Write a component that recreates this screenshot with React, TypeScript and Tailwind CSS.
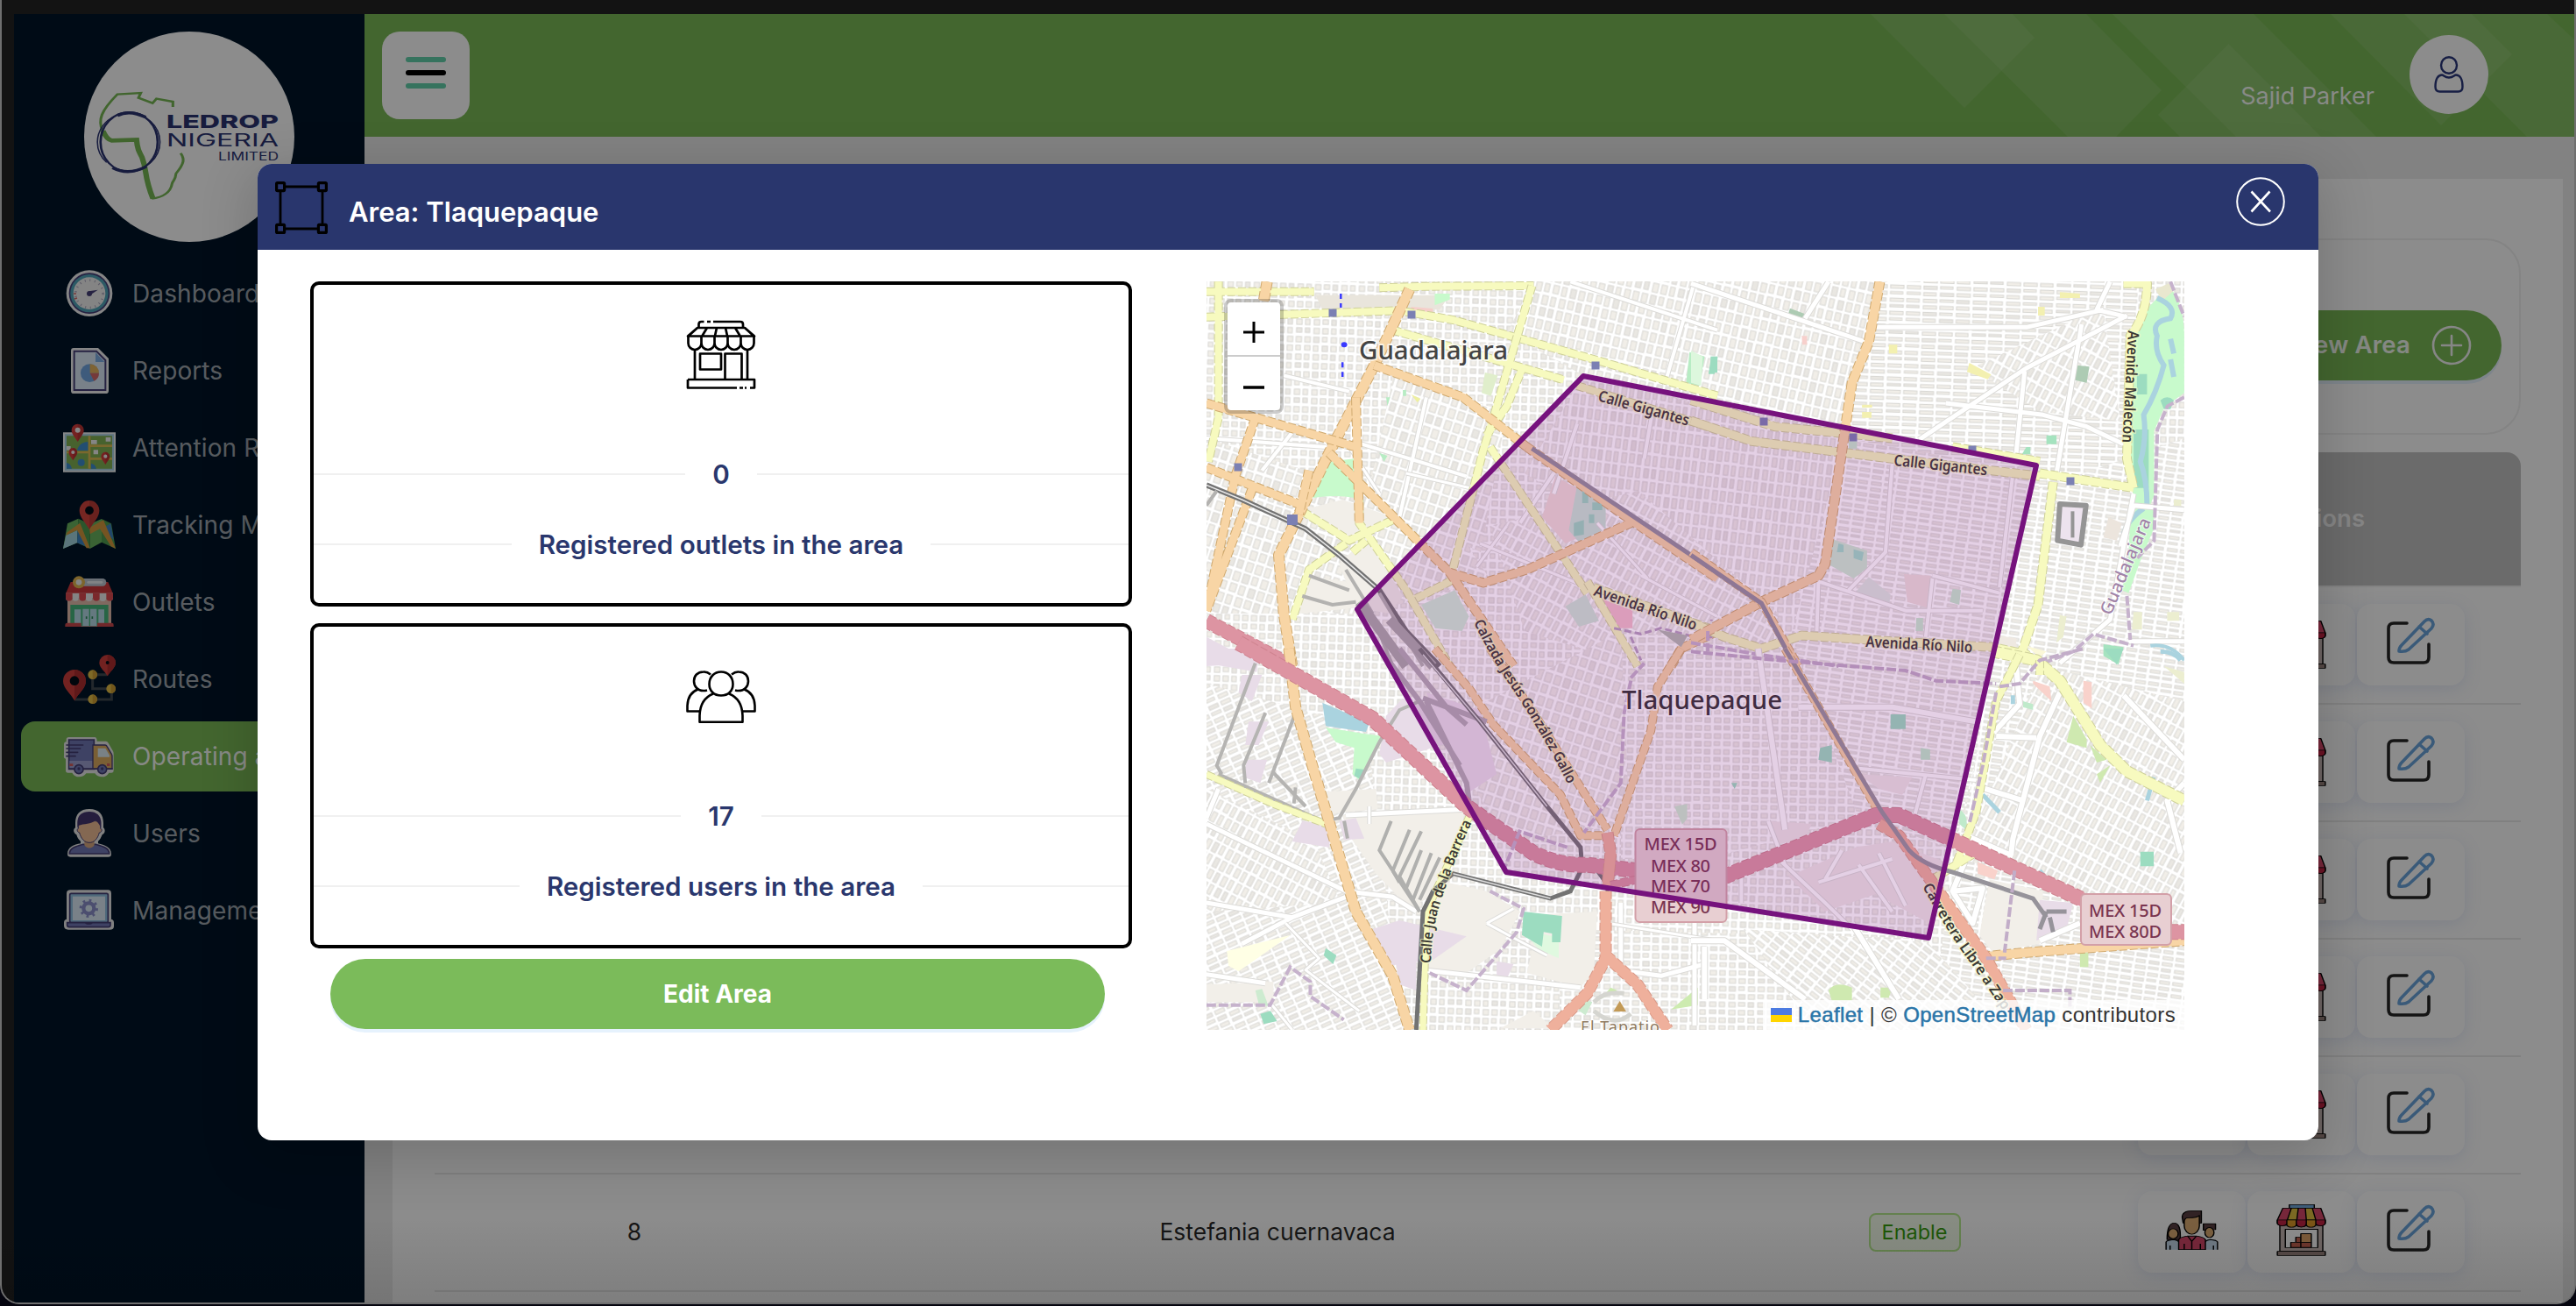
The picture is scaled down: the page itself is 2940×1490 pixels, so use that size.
import React from "react";

const INTER = "font-['Inter','Noto_Sans',sans-serif]";

/* ---------- Sidebar icons ---------- */

const DashboardIcon = () => (
  <svg viewBox="216 45 180 180" className="size-[60px]">
    <circle cx="306" cy="134" r="79" fill="#f2f2f2" />
    <circle cx="306" cy="134" r="70" fill="#453f78" />
    <circle cx="306" cy="134" r="65" fill="#50a5b8" />
    <circle cx="306" cy="134" r="55" fill="#f0f0f0" />
    <circle cx="306" cy="136" r="47" fill="none" stroke="#a9a5bd" strokeWidth="8" strokeDasharray="3 14" />
    <path d="M252 135h9M255 153l9-3" stroke="#d56b6b" strokeWidth="5" />
    <circle cx="306" cy="135" r="9" fill="#453f78" />
    <path d="M304 127l31-5-27 18z" fill="#453f78" />
  </svg>
);

const ReportsIcon = () => (
  <svg viewBox="216 309 180 180" className="size-[60px]">
    <path d="M252 321h84l36 36v110q0 10-10 10H252q-9 0-9-10V331q0-10 9-10z" fill="#f2f2f2" />
    <path d="M254 332h76l31 31v102H254z" fill="#dcebfa" stroke="#453f78" strokeWidth="6" />
    <path d="M327 336v33h31z" fill="#7fb0e5" />
    <circle cx="307" cy="407" r="31" fill="#72a7e2" />
    <path d="M308 407v-31a31 31 0 0 1 31 31z" fill="#e6b560" />
    <path d="M308 407h31a31 31 0 0 1-17 27z" fill="#d56b6b" />
  </svg>
);

const Pin = ({ x, y, s, c = "#d63c3c", h = "#f2f2f2" }: { x: number; y: number; s: number; c?: string; h?: string }) => (
  <g transform={`translate(${x} ${y}) scale(${s})`}>
    <path d="M0 0C-9-16-21-26-21-40a21 21 0 0 1 42 0C21-26 9-16 0 0z" fill={c} />
    <path d="M0 0C9-16 21-26 21-40A21 21 0 0 0 0-61z" fill="#000" opacity=".12" />
    <circle cx="0" cy="-40" r="9" fill={h} />
  </g>
);

const AttentionIcon = () => (
  <svg viewBox="216 573 180 180" className="size-[60px]">
    <path d="M216 610h180v136H216z" fill="#f0f4f6" />
    <path d="M222 616h168v124H222z" fill="#a9d3e8" />
    <path d="M228 622h156v112H228z" fill="#82b255" />
    <path d="M264 672q6-28 38-30v30zM228 714q14 2 18 20h-18zM312 716q14 2 18 18h-18z" fill="#3f8fd0" />
    <circle cx="278" cy="713" r="12" fill="#3f8fd0" />
    <path d="M306 622v112M228 678h78M306 656h78M306 700h78" stroke="#dfbe55" strokeWidth="8" />
    <path d="M312 636h20v14h-20zM362 627h17v14h-17zM320 670h16v15h-16zM228 657h14v14h-14z" fill="#f2f2f2" />
    <Pin x={266} y={642} s={1} />
    <Pin x={250} y={706} s={0.7} />
    <Pin x={361} y={720} s={0.7} />
  </svg>
);

const TrackingIcon = () => (
  <svg viewBox="216 837 180 180" className="size-[60px]">
    <path d="M231 922l37-17-4 83-48 20z" fill="#6bb55f" />
    <path d="M226 962l40-18-2 44-48 20z" fill="#a4d5e0" />
    <path d="M268 905l40 18v85l-44-20z" fill="#4f9d50" />
    <path d="M266 944l42 62-44-18z" fill="#3d83c4" />
    <path d="M308 923l40-17v80l-40 22z" fill="#6bb55f" />
    <path d="M348 906l33 16 15 86-48-22z" fill="#4f9d50" />
    <path d="M348 940l31-18 10 56z" fill="#3d83c4" />
    <path d="M230 952l44-32 34 86h-12l-32-62-38 18zM306 936l48-26 42 98-16-8-38-60-34 18z" fill="#d69a3f" />
    <Pin x={306} y={942} s={1.62} c="#d8453f" h="#000b16" />
  </svg>
);

const OutletsIcon = () => (
  <svg viewBox="216 1101 180 180" className="size-[60px]">
    <path d="M231 1180h150v94H231z" fill="#e8c0b0" />
    <path d="M241 1200h130v72H241z" fill="#48b87e" />
    <path d="M255 1216h22v54h-22zM283 1214h22v58h-22zM309 1214h22v58h-22zM337 1216h20v54h-20z" fill="#b9dcea" />
    <path d="M242 1122h128l17 40H225z" fill="#cf3a3c" />
    <path d="M225 1160h162v16a11 11 0 0 1-23 0 11 11 0 0 1-24 0 11 11 0 0 1-23 0 11 11 0 0 1-24 0 11 11 0 0 1-23 0 11 11 0 0 1-23 0 11 11 0 0 1-22 0z" fill="#f0f0f0" />
    <path d="M225 1160h23v16a11 11 0 0 1-23 0zM271 1160h23v16a11 11 0 0 1-23 0zM318 1160h23v16a11 11 0 0 1-23 0zM364 1160h23v16a11 11 0 0 1-23 0z" fill="#e04b50" />
    <rect x="260" y="1110" width="104" height="26" rx="13" fill="#bfcad6" />
    <path d="M302 1123h46" stroke="#eceff2" strokeWidth="8" strokeLinecap="round" />
    <circle cx="270" cy="1123" r="21" fill="#e3b850" />
    <circle cx="270" cy="1123" r="10" fill="#f0f0f0" />
    <path d="M223 1269q0-7 7-7h48v13h-55zM333 1262h50q6 0 6 7v6h-56z" fill="#cc4a4e" />
    <path d="M296 1240v8M316 1240v8" stroke="#2f8a5a" strokeWidth="5" />
  </svg>
);

const RoutesIcon = () => (
  <svg viewBox="216 165 180 180" className="size-[60px]">
    <path d="M255 324h127v-37h-65v-48h50" fill="none" stroke="#404a50" strokeWidth="9" />
    <path d="M255 328c-14-26-39-42-39-67a39 39 0 0 1 78 0c0 25-25 41-39 67z" fill="#d03f3c" />
    <path d="M255 328c14-26 39-42 39-67a39 39 0 0 0-39-39z" fill="#b02f30" />
    <circle cx="255" cy="260" r="16" fill="#000b16" />
    <path d="M368 244c-10-18-28-28-28-45a28 28 0 0 1 56 0c0 17-18 27-28 45z" fill="#d03f3c" />
    <path d="M368 244c10-18 28-28 28-45a28 28 0 0 0-28-28z" fill="#b02f30" />
    <circle cx="368" cy="198" r="6" fill="#000b16" />
    {[[317, 239], [380, 287], [317, 323]].map(([x, y]) => (
      <g key={`${x}-${y}`}>
        <circle cx={x} cy={y} r="16" fill="#e6c048" />
        <path d={`M${x} ${y - 16}a16 16 0 0 1 0 32z`} fill="#cf9f34" />
      </g>
    ))}
  </svg>
);

const TruckIcon = () => (
  <svg viewBox="216 429 180 180" className="size-[60px]">
    <path d="M236 453h88q8 0 8 14h30q6 0 9 6l16 28q2 4 2 10v56q0 8-8 8h-8q-8 14-24 14-16 0-24-12h-30q-8 12-24 12t-24-14h-14q-8 0-8-8v-40q-8-2-6-12v-36q0-10 8-10v-8q0-8 9-8z" fill="#eaeaea" />
    <path d="M236 462h86v100h-86z" fill="#7279b6" stroke="#443e75" strokeWidth="5" />
    <path d="M238 534h84v27h-84z" fill="#9ea2d2" />
    <path d="M318 480h42q4 0 6 4l16 27q2 3 2 7v44h-66z" fill="#dfae62" stroke="#443e75" strokeWidth="4" />
    <path d="M335 491h26l14 24v6h-40z" fill="#dcebf5" />
    <path d="M228 480h56M228 492h47M228 505h38M228 518h30" stroke="#443e75" strokeWidth="5" strokeLinecap="round" />
    <path d="M234 561h152" stroke="#443e75" strokeWidth="5" />
    <path d="M238 544h12v8h-12zM366 543h10v9h-10z" fill="#d25b5b" />
    {[270, 350].map((x) => (
      <g key={x}>
        <circle cx={x} cy="563" r="15" fill="#7279b6" stroke="#443e75" strokeWidth="5" />
        <circle cx={x} cy="561" r="5" fill="#443e75" />
      </g>
    ))}
  </svg>
);

const UserIcon = () => (
  <svg viewBox="216 693 180 180" className="size-[60px]">
    <path d="M306 699c34 0 48 20 48 48v16c8 6 6 20-4 24-4 10-8 18-14 22v8c22 6 45 12 45 36 0 8-4 10-10 10H241c-8 0-10-4-10-10 0-24 22-32 45-36v-8c-8-6-12-14-14-22-12-6-12-20-4-24v-16c0-30 16-48 48-48z" fill="#eaeaea" />
    <path d="M238 852c0-20 24-26 46-32h44c22 6 46 12 46 32z" fill="#7279b6" stroke="#443e75" strokeWidth="5" />
    <path d="M289 806h34v16c-6 14-28 14-34 0z" fill="#dba982" />
    <path d="M268 740h76v26c8 2 4 14-4 14-6 22-18 34-34 34s-28-12-34-34c-8-2-10-12-4-14z" fill="#f0bd96" stroke="#443e75" strokeWidth="3" />
    <path d="M265 764v-18c0-26 16-38 41-38s40 14 40 38v18c-4-8-8-18-20-26-14 14-38 10-58 18z" fill="#443570" />
  </svg>
);

const ManagementIcon = () => (
  <svg viewBox="216 957 180 180" className="size-[60px]">
    <path d="M240 976h130q11 0 11 12v88q9 2 9 12v12q0 12-14 12H234q-15 0-15-14v-10q0-10 9-12v-88q0-12 12-12z" fill="#eaeaea" />
    <rect x="239" y="988" width="131" height="100" rx="5" fill="#8fc0e0" stroke="#443e75" strokeWidth="5" />
    <path d="M249 998h111v82H249z" fill="#dcebf8" />
    <path d="M230 1088h148v8q0 7-8 7H238q-8 0-8-7z" fill="#7279b6" stroke="#443e75" strokeWidth="5" />
    <path d="M291 1089h26q-2 5-8 5h-10q-6 0-8-5z" fill="#443e75" />
    <circle cx="304" cy="1039" r="18" fill="none" stroke="#8a8fcb" strokeWidth="13" />
    <circle cx="304" cy="1039" r="27" fill="none" stroke="#8a8fcb" strokeWidth="10" strokeDasharray="8 13.2" />
  </svg>
);

const nav = [
  { label: "Dashboard", Icon: DashboardIcon },
  { label: "Reports", Icon: ReportsIcon },
  { label: "Attention Radius", Icon: AttentionIcon },
  { label: "Tracking Map", Icon: TrackingIcon },
  { label: "Outlets", Icon: OutletsIcon },
  { label: "Routes", Icon: RoutesIcon },
  { label: "Operating areas", Icon: TruckIcon, active: true },
  { label: "Users", Icon: UserIcon },
  { label: "Management", Icon: ManagementIcon },
];

const Logo = () => (
  <svg viewBox="96 36 240 240" className="size-[240px] rounded-full bg-white">
    <g transform="scale(.44643 .33333)" fill="none">
      <path d="M262 448C250 410 258 380 300 323l60-5-6 17 36 18 10-15 42 10v18" stroke="#77b955" strokeWidth="7" />
      <path d="M388 680c26-4 48-20 52-52 4-14 8-10 10-34 22-36 22-50 12-70" stroke="#77b955" strokeWidth="7" />
      <path d="M263 448q10 30 22 33l64-3c2 30 6 40 14 60 14 50 4 60 28 142" stroke="#77b955" strokeWidth="14" />
      <ellipse cx="330" cy="486" rx="73" ry="102" stroke="#2b3372" strokeWidth="6" />
      <ellipse cx="329" cy="486" rx="80" ry="99" stroke="#2b3372" strokeWidth="3.500" strokeDasharray="180 26" />
      <path d="M300 396q30-22 72 5M288 574q40 28 86-4" stroke="#2b3372" strokeWidth="10" />
    </g>
    <g fill="#2b3372" className="font-['Inter','Liberation_Sans',sans-serif]">
      <text x="190" y="146" fontSize="20.5" fontWeight="800" textLength="128" lengthAdjust="spacingAndGlyphs">LEDROP</text>
      <text x="190" y="166.5" fontSize="19.5" fontWeight="400" textLength="128" lengthAdjust="spacingAndGlyphs">NIGERIA</text>
      <text x="249" y="182.5" fontSize="12.5" fontWeight="400" textLength="69" lengthAdjust="spacingAndGlyphs">LIMITED</text>
    </g>
  </svg>
);

const Sidebar = () => (
  <aside className="flex w-[400px] shrink-0 flex-col bg-[#001529] px-2 pt-5">
    <div className="flex justify-center">
      <Logo />
    </div>
    <nav className="mt-[19px] flex flex-col gap-2">
      {nav.map(({ label, Icon, active }) => (
        <div
          key={label}
          className={
            active
              ? "flex h-20 items-center gap-[19px] rounded-2xl bg-[#7bbb57] pl-12 text-[28px] text-[#fffffff0]"
              : "flex h-20 items-center gap-[19px] rounded-2xl pl-12 text-[28px] text-[#ffffffa6]"
          }
        >
          <Icon />
          <span className="whitespace-nowrap tracking-[0.1px]">{label}</span>
        </div>
      ))}
    </nav>
  </aside>
);

/* ---------- Top bar ---------- */

const HeaderShapes = () => (
  <svg viewBox="2100 16 840 140" className="absolute top-0 right-0 h-[140px] w-[840px]" fill="#fff" fillOpacity=".08">
    <path d="M2135 16L2242 123 2322 43 2297 16z" />
    <path d="M2219 16L2360 156H2415L2467 103 2381 16z" />
    <path d="M2411 16L2552 156H2712L2572 16z" />
    <path d="M2543.5 50L2463 131 2488 156H2649z" />
    <path d="M2660 16L2786 143 2867 62 2821 16z" />
    <path d="M2744 16L2884 156H2940V47L2907 16z" />
  </svg>
);

const TopBar = () => (
  <header className="relative flex h-[140px] shrink-0 items-start justify-between bg-[#7bbb57] pt-5 pr-[100px] pl-5">
    <HeaderShapes />
    <button className="flex size-[100px] flex-col items-center gap-[9px] rounded-[20px] bg-white pt-[29px]">
      <span className="h-1.5 w-[46px] rounded-full bg-[#63d1ac]" />
      <span className="h-1.5 w-[46px] rounded-full bg-black" />
      <span className="h-1.5 w-[46px] rounded-full bg-[#63d1ac]" />
    </button>
    <div className="relative flex gap-10 pt-1">
      <span className="pt-[52px] text-[27px] leading-9 text-[#fffffff0]">Sajid Parker</span>
      <span className="flex size-[90px] items-center justify-center rounded-full bg-white">
        <svg viewBox="0 0 34 42" className="h-[42px] w-[34px]" fill="none" stroke="#2b387c" strokeWidth="2.4">
          <ellipse cx="17" cy="10.5" rx="9" ry="9.3" />
          <path d="M9 21.500c-4 0-7.500 4-7.500 13.500 0 4 2 5.500 5 5.500h21c3 0 5-1.500 5-5.500 0-9.500-3.500-13.500-7.500-13.500-2 0-3 3-8 3s-6-3-8-3z" />
        </svg>
      </span>
    </div>
  </header>
);

/* ---------- Table ---------- */

const TeamIcon = () => (
  <svg viewBox="752 530 106 137" preserveAspectRatio="none" className="h-[46px] w-[61px]" stroke="#000" strokeWidth="2.500" strokeLinejoin="round">
    <path d="M754 666v-26q2-10 14-10 12 0 14 10v26zM828 666v-26q2-10 14-10 12 0 14 10v26z" fill="#c9dcee" stroke="none" />
    <path d="M756 632q0-56 14-56t12 56zM828 600v-22h24v20z" fill="#5a3f42" />
    <ellipse cx="768" cy="612" rx="10" ry="17" fill="#dfae74" />
    <ellipse cx="840" cy="608" rx="9" ry="17" fill="#dfae74" />
    <path d="M754 666v-26q2-6 14-8 12 2 12 12M856 666v-26q-2-6-14-8-10 2-12 12M762 666v-14M848 666v-14" fill="none" />
    <path d="M779 666v-34q3-8 18-12h17q15 4 18 12v34z" fill="#d8486a" />
    <path d="M786 556q0-22 20-22h18v42h-36z" fill="#5a3f42" />
    <path d="M790 572q0-14 8-14 18 0 22-8v36c0 16-8 28-15 28s-15-12-15-28z" fill="#dfae74" />
    <path d="M797 620l8 18 9-18M805 638v28M790 666v-20M822 666v-20" fill="none" />
  </svg>
);

const ShopIcon = () => (
  <svg viewBox="971 509 100 181" preserveAspectRatio="none" className="h-[60px] w-[57px]" stroke="#000" strokeWidth="2.500" strokeLinejoin="round">
    <path d="M978 584h86v90h-86z" fill="#c9b9b4" />
    <path d="M997 513h50v12h-50z" fill="#74a9dc" />
    <path d="M984 525h76l9 41v10a10 10 0 0 1-19 4 10 10 0 0 1-19 0 10 10 0 0 1-20 0 10 10 0 0 1-19 0 10 10 0 0 1-19-4v-10z" fill="#d8486a" />
    <path d="M1001 525h14l-3 41v20q-12 0-19-10v-10zM1029 525h14l7 41v10q-8 12-19 10v-20z" fill="#e0c040" />
    <path d="M973 566h96v10a10 10 0 0 1-19 4 10 10 0 0 1-19 0 10 10 0 0 1-20 0 10 10 0 0 1-19 0 10 10 0 0 1-19-4z" fill="#c42444" />
    <path d="M992 566h19v18a10 10 0 0 1-19 0zM1031 566h19v18a10 10 0 0 1-19 0z" fill="#e09c28" />
    <path d="M989 598h65v63h-65z" fill="#fff" />
    <path d="M1000 643h20v17h-20zM1010 625h12v18h-12zM1020 643h21v17h-21z" fill="#c56350" />
    <path d="M1020 613h21v30h-21z" fill="#e0a568" />
    <path d="M973 674h96v14h-96z" fill="#9b8580" />
  </svg>
);

const EditIcon = () => (
  <svg viewBox="0 0 56 56" className="size-14" fill="none" strokeWidth="3.600" strokeLinecap="round" strokeLinejoin="round">
    <path d="M23 8H8q-6 0-6 6v33q0 6 6 6h34q6 0 6-6V32" stroke="#262626" />
    <path d="M17 33L43 6q4-4 8-1 4 4 0 9L25 38q-4 3-11 2 0-4 3-7zM37 12l9 8" stroke="#6ba5dc" />
  </svg>
);

const ActionCard = ({ children }: { children: React.ReactNode }) => (
  <div className="flex h-[93px] w-[123px] justify-center rounded-2xl bg-white pt-3.5 shadow-[0_4px_20px_rgba(90,120,200,0.16)]">
    {children}
  </div>
);

const rows: { key: number; id?: string; name?: string; status?: string }[] = [
  { key: 3 },
  { key: 4 },
  { key: 5 },
  { key: 6 },
  { key: 7 },
  { key: 8, id: "8", name: "Estefania cuernavaca", status: "Enable" },
];

const AreasPage = () => (
  <main className="mt-12 ml-8 flex h-[1300px] w-[2477px] shrink-0 flex-col bg-white px-12 pt-[68px]">
    <section className="flex h-[224px] w-[2381px] shrink-0 items-center justify-end rounded-[40px] border-2 border-[#f0f0f0] pr-5 pb-0">
      <button className="mt-5 flex h-20 w-[310px] items-center justify-end gap-6 rounded-full bg-[#7bbb57] pr-[34px] text-[27.500px] font-semibold tracking-[0.2px] text-white/90 shadow-[0_4px_0_#e6f2fd]">
        New Area
        <svg viewBox="0 0 46 46" className="size-[46px]" fill="none" stroke="#f4f4f4" strokeWidth="2.600">
          <circle cx="23" cy="23" r="21" />
          <path d="M23 12v22M12 23h22" strokeLinecap="round" />
        </svg>
      </button>
    </section>
    <div className="mt-5 flex w-[2381px] shrink-0 flex-col">
      <div className="flex h-[154px] items-center justify-end rounded-tr-2xl rounded-tl-2xl border-b-2 border-[#f0f0f0] bg-[#c3c3c3] pr-[178px] text-[27.500px] font-semibold text-[#f3f3f3]">
        Actions
      </div>
      {rows.map((r) => (
        <div
          key={r.key}
          className="grid h-[134px] grid-cols-[456px_1012px_442px_471px] items-center border-b-2 border-[#eaeaea] text-center text-[26.500px] text-black/85"
        >
          <span>{r.id}</span>
          <span>{r.name}</span>
          <span>
            {r.status && (
              <span className="inline-block rounded-lg border-2 border-[#b7eb8f] bg-[#f6ffed] px-[13px] text-[23.500px] leading-10 text-[#389e0d]">
                {r.status}
              </span>
            )}
          </span>
          <span className="flex w-[407px] -translate-y-px justify-end gap-0.5">
            <ActionCard><div className="pt-[7px]"><TeamIcon /></div></ActionCard>
            <ActionCard><ShopIcon /></ActionCard>
            <ActionCard><EditIcon /></ActionCard>
          </span>
        </div>
      ))}
    </div>
  </main>
);

/* ---------- Map ---------- */

const KX = 600 / 1568;
const KY = 1 / 3;

const Tile = ({ x, y, children }: { x: number; y: number; children: React.ReactNode }) => (
  <g transform={`translate(${x} ${y}) scale(${KX} ${KY})`}>{children}</g>
);

const roadColors = {
  yellow: ["#f7fabf", "#cfd19a"],
  orange: ["#f8d5a5", "#d0aa70"],
  pink: ["#dd94a2", "#cf8490"],
  salmon: ["#efb09c", "#d99a88"],
  white: ["#ffffff", "#dcdbd8"],
} as const;

const Road = ({ d, kind, w = 9 }: { d: string; kind: keyof typeof roadColors; w?: number }) => (
  <g fill="none" strokeLinejoin="round">
    <path d={d} stroke={roadColors[kind][1]} strokeWidth={w + 2} strokeDasharray={kind === "white" ? undefined : "9 3"} vectorEffect="non-scaling-stroke" />
    <path d={d} stroke={roadColors[kind][0]} strokeWidth={w} vectorEffect="non-scaling-stroke" />
  </g>
);

const Rail = ({ d, w = 4, c = "#737373" }: { d: string; w?: number; c?: string }) => (
  <path d={d} fill="none" stroke={c} strokeWidth={w} vectorEffect="non-scaling-stroke" />
);

const Streets = ({ id, angle, w, h }: { id: string; angle: number; w: number; h: number }) => (
  <pattern id={id} width={w * 5} height={h * 4} patternUnits="userSpaceOnUse" patternTransform={`rotate(${angle})`}>
    <rect width={w * 5} height={h * 4} fill="#fff" />
    {[0, 1, 2, 3].map((r) =>
      [0, 1, 2, 3, 4].map((c) => (
        <rect
          key={`${r}${c}`}
          x={c * w + 1.9}
          y={r * h + 1.9}
          width={w - ((r + c) % 3 === 0 ? 4.8 : 3.8)}
          height={h - ((r * 2 + c) % 4 === 0 ? 4.8 : 3.8)}
          fill={(r * 3 + c) % 4 === 0 ? "#e9e7e2" : "#f1eee8"}
          stroke="#d6d5d1"
          strokeWidth=".9"
        />
      )),
    )}
  </pattern>
);

const Metro = ({ pts }: { pts: number[][] }) => (
  <>
    {pts.map(([x, y, s = 9]) => (
      <rect key={`${x}-${y}`} x={x - s / 2} y={y - s / 2} width={s} height={s} fill="#7b80b3" />
    ))}
  </>
);

const CityMap = () => (
  <svg viewBox="1377 321 1116 854" className="h-[854px] w-[1116px]">
    <defs>
      <Streets id="st-nw" angle={2} w={10} h={10} />
      <Streets id="st-w" angle={18} w={11} h={14} />
      <Streets id="st-n" angle={13} w={10} h={14} />
      <Streets id="st-ne" angle={2} w={19} h={7.500} />
      <Streets id="st-e" angle={8} w={15} h={7} />
      <Streets id="st-c" angle={7} w={9} h={15} />
      <Streets id="st-s" angle={1} w={11} h={9} />
      <Streets id="st-se" angle={38} w={14} h={8} />
      <Streets id="st-sw" angle={-24} w={15} h={8} />
      <Streets id="st-d" angle={28} w={9} h={15} />
      <path id="lbl-gallo" d="M1682 710Q1700 748 1722 780Q1760 836 1790 896" />
      <path id="lbl-barrera" d="M1633 1099Q1634 1055 1648 1018Q1664 970 1681 936" />
      <path id="lbl-zapo" d="M2194 1011Q2225 1068 2250 1100L2288 1156" />
    </defs>

    <rect x="1377" y="321" width="1116" height="854" fill="url(#st-nw)" />
    <path d="M1377 500L1560 560 1660 600 1700 660 1560 700 1377 700z" fill="url(#st-w)" />
    <path d="M1750 321H2145L2110 500 1810 430 1720 380z" fill="url(#st-n)" />
    <path d="M1590 430L1720 470 1690 630 1560 570z" fill="url(#st-w)" />
    <path d="M2145 321H2440V560H2300L2105 500z" fill="url(#st-ne)" />
    <path d="M2250 420L2400 350 2420 480 2330 470z" fill="url(#st-d)" />
    <path d="M1807 429L2100 500 2070 680 1990 690 1740 540z" fill="url(#st-c)" />
    <path d="M2105 500L2330 540 2280 760 2040 740z" fill="url(#st-e)" />
    <path d="M1700 600L1870 560 2030 700 2000 800 1740 720z" fill="url(#st-d)" />
    <path d="M1850 720L2060 740 2130 930 1950 980 1850 980z" fill="url(#st-s)" />
    <path d="M2050 740L2280 760 2230 970 2120 930z" fill="url(#st-e)" />
    <path d="M2320 560L2493 500V1175H2200L2240 940z" fill="url(#st-e)" />
    <path d="M2330 760L2493 800V1060L2240 980z" fill="url(#st-d)" />
    <path d="M1377 780L1560 830 1600 1175H1377z" fill="url(#st-sw)" />
    <path d="M1377 900L1500 960 1530 1030 1377 1040z" fill="url(#st-d)" />
    <path d="M1780 1060L2180 1070 2280 1175H1780z" fill="url(#st-s)" />
    <path d="M1990 1060L2200 1075 2290 1175H2070z" fill="url(#st-se)" />
    <path d="M1640 830L1850 720 1860 940 1720 960z" fill="url(#st-w)" />

    <Tile x={1360} y={310}>
      <path d="M370 80h400l-30 50H390z" fill="#e9e5dc" />
      <path d="M655 120l65 6v14l-65-8z" fill="#f5cfca" />
      <path d="M725 75h45v20l-45 20z" fill="#c8facc" />
      <path d="M350 810l100-30 150 60-80 80-60 20z" fill="#f2efe9" />
      <path d="M362 768l46-118 78-10v134q-60-12-124 0z" fill="#c8facc" />
      <path d="M440 1000l80-90 110 200-40 60-100-20z" fill="#f2efe9" />
      <path d="M330 1040l130 20 40 90-180 20z" fill="#f2efe9" />
      <path d="M1085 700l140 90-10 90-100 50-70-90z" fill="#f0ddd8" />
      <path d="M1150 730l85 60v90l-80 45-30-40z" fill="#c9e4d4" />
      <path d="M1165 750l18 12v30h-18zM1195 790h30v26h-30zM1140 860l30-10v50l-30 5zM1185 830h16v30h-16z" fill="#9cd6c0" />
      <path d="M685 1140l100-50 42 90-20 50-80-10z" fill="#d0ecd6" />
      <path d="M1115 1145l60-40 40 90-60 20z" fill="#cfe6d6" />
      <path d="M1225 1120l90 40v60h-40z" fill="#f4c0cb" />
      <path d="M875 345l38 10-20 70-28-10z" fill="#e0eecb" />
      <path d="M1485 275l45 15-15 100-40-10zM580 430h12l-8 30zM630 405h10v20h-10zM560 620l24 10-10 20z" fill="#b8ecc4" />
      <path d="M1548 290h20v55h-20z" fill="#9cdcc0" />
      <path d="M655 420l28 15-10 12z" fill="#eef0a0" />
      <path d="M44 1250l150 90-150 10z" fill="#e8dce8" />

      <Road kind="white" w={4} d="M1130 34L1568 200M1500 34L1410 390M275 355L470 410M480 580L820 700M700 430L620 840M44 570L400 600M210 680L300 550M1080 690L980 860M1150 520L1080 760M1380 440L1350 640" />
      <Road kind="white" w={3} d="M830 740L640 690M470 600L560 760M860 930L1180 1080M940 870L850 1010M1210 860L1360 1050M1340 1040L1568 1180" />
      <Road kind="yellow" w={8} d="M44 68H365M560 55L700 50 1020 48M80 34V500L50 650M44 155L620 133 780 165 1200 300 1568 425" />
      <Road kind="yellow" w={8} d="M1015 48L900 500 870 610 770 1060 650 1130M600 200L1110 370M990 320L940 460 880 560M890 600L1180 1100" />
      <Road kind="yellow" w={8} d="M1150 390L1568 540M330 820L470 920 600 850M460 930L350 1020 300 1190M480 960L520 920M500 780V860L640 1090 770 1350M1180 1060L1330 1350M1200 1080L1568 1230" />
      <Road kind="orange" w={11} d="M225 34L215 100M650 60L545 320 410 620 320 830 260 970 275 1170 300 1350" />
      <Road kind="orange" w={9} d="M44 450L490 600M190 500L130 700 44 1160M44 670L330 800M350 680L320 830M180 745L44 1160M545 320L810 430 1000 600M490 430L500 860M410 620L770 1030 870 1065 1000 1020 1310 860M770 1030L960 1350M1000 600L1310 850 1568 1050M1568 1230L1460 1290 1430 1350" />
      <Rail d="M44 730L150 780 340 880 440 970 560 1090 640 1230 740 1350" w={6} />
      <Rail d="M44 730L150 780 340 880 440 970 560 1090" w={1.500} c="#e9e9e9" />
      <Rail d="M75 750L44 800M350 1040L470 1090M330 1110L420 1140 490 1130M460 1020L540 1170M560 1100L690 1350M530 1150L600 1350" w={4} c="#b3b2b0" />
      <Rail d="M500 1130L640 1350M590 1190L720 1350" w={11} c="#aaa8a8" />
      <Rail d="M1015 605L1568 1030" w={5} c="#94909c" />
      <Road kind="pink" w={15} d="M44 1195L300 1350" />
      <path d="M1260 1220l80 20 60-20 100 30h50v-60M1310 1250l30 80" fill="none" stroke="#b79fc0" strokeWidth="3" strokeDasharray="8 4" vectorEffect="non-scaling-stroke" />
      <path d="M1390 1225l90 20-20 40z" fill="#b3b8b0" />
      <path d="M445 75v48M450 310v50" stroke="#3a3aff" strokeWidth="2.500" strokeDasharray="6 5" vectorEffect="non-scaling-stroke" />
      <circle cx="455" cy="250" r="9" fill="#3a3aff" />
    </Tile>

    <Tile x={1930} y={310}>
      <path d="M1390 90l40-35q40 60 41 160v200l-60 50-30 80v220l-20 60h-40l-10-200V500l15-330z" fill="#c8facc" />
      <path d="M1310 820l70-10v70l-40 110-35 110-20-10 20-110z" fill="#c8facc" />
      <path d="M1330 350h30v70h-30zM1400 440q20-20 40 0l-10 30h-20zM1320 540h45v200h-45z" fill="#9cdcc0" />
      <path d="M1385 60l40-20 20 20-40 40z" fill="#e9e7cf" />
      <path d="M1390 90q60 30 40 70-60 10-40 60-10 50 20 100-20 90-60 170 10 80-10 160 20 60 20 150M1350 810q-50 40-60 90M1430 230l10 50M1430 300l10 60" fill="none" stroke="#aad3df" strokeWidth="6" vectorEffect="non-scaling-stroke" />
      <path d="M1100 795l78 5-15 135-70-15z" fill="#ede3ee" stroke="#959595" strokeWidth="6" strokeLinejoin="round" vectorEffect="non-scaling-stroke" />
      <path d="M1138 820v90" stroke="#959595" strokeWidth="4" vectorEffect="non-scaling-stroke" />
      <path d="M420 915l105 40v60l-40 35-70-45z" fill="#cdebd3" />
      <path d="M440 930l15 5v25h-20zM485 950l30 10-5 30-25-10z" fill="#9fdcc8" />
      <path d="M530 1045l65 60-5 40-105-40z" fill="#dfe9e2" />
      <path d="M635 1035l80 5-10 110-60-20z" fill="#f0e2de" />
      <path d="M780 1085l25 5-5 50-28-10zM672 1185h20v45h-22zM470 580h25v25h-25z" fill="#c8ebd0" />
      <path d="M1150 320l38 5-8 55-40-10zM295 125l45 20-10 15-40-15z" fill="#adcbb3" />
      <path d="M0 270l35 20-5 100-30-10z" fill="#ddf7dd" />
      <path d="M60 292h20l-10 58h-18z" fill="#9cdcc0" />
      <path d="M830 312l65 40-10 16-62-25zM590 250h25v30h-25zM1035 120h20v30h-20zM510 455h30v10h-30zM510 480h28v20h-28zM1100 70l60 5v15h-60z" fill="#f3f0b0" />
      <path d="M1060 560h30v30h-30zM1000 600h12v25h-25zM1230 1275l60 10-15 60-45-30z" fill="#a5e3bf" />
      <path d="M1100 1175l20 5-10 70-20 20zM1320 1165h25v60h-30zM1420 1165h36v30h-36zM1440 780h22v22h-22z" fill="#eceed0" />
      <path d="M920 1245l50 10v50l-50-10z" fill="#efe9e2" />
      <path d="M330 220h16v30h-14z" fill="#f7d0cc" />
      <path d="M1000 1280l60 20-20 20z" fill="#fbf8d8" />
      <path d="M1245 840l40 20-15 60-40-10z" fill="#ece5dd" />

      <Road kind="white" w={5} d="M0 40L520 240M410 34L340 160M550 190H1000L1230 130M1300 150L1000 330 680 575M1250 34L1210 130 1300 155M1165 180L1090 690M995 340L970 620M760 450L1050 490 1180 530 1290 590M1320 760L1290 940 1250 1190 1100 1340M1280 940L1320 800 1471 815M1300 1265H1471" />
      <Road kind="white" w={4} d="M720 1040L920 1100M600 660L580 960 470 1090M380 1060L640 1160H870M720 1050L700 1250M960 690L920 1080M380 1060L375 1230" />
      <Road kind="yellow" w={9} d="M0 440L250 530 600 570M780 600L1040 650M0 510L180 580 600 640 1040 700M1040 690L1320 740M1290 40H1360Q1360 150 1310 220L1300 640 1320 740M1080 720L1035 1140 990 1290 960 1350M0 1200L100 1250 210 1290 330 1245 600 1265 900 1285 1000 1310 1040 1350" />
      <Road kind="orange" w={10} d="M563 34L530 240 480 380 400 1000 380 1040 210 1130 0 1260" />
      <Road kind="orange" w={8} d="M0 960L210 1130 320 1350" />
      <Rail d="M0 970L210 1135 310 1350" w={5} c="#94909c" />
      <path d="M0 1270l200 40 240 40M50 1230v70M1430 34q20 60 41 120M1471 430l-50 30-30 80-10 380-50 60M1300 1110l10 150M1050 1340l90-40 60-60 120 40" fill="none" stroke="#c6b2cc" strokeWidth="4" strokeDasharray="11 3" vectorEffect="non-scaling-stroke" />
      <path d="M1370 1280q60-10 101 50" fill="none" stroke="#aad3df" strokeWidth="4" vectorEffect="non-scaling-stroke" />
    </Tile>

    <Tile x={1360} y={740}>
      <path d="M44 0h160l-10 80-150-30zM150 90h60l-30 90-40-30zM170 250h60l-30 80h-40zM165 380h60l-20 80-50-20z" fill="#e8dce8" />
      <path d="M330 590l90 10-10 80-110-20z" fill="#e8dce8" />
      <path d="M450 570l370-20-20 60-90 240-60 40-100-120-80-130z" fill="#f2efe9" />
      <path d="M440 590l50-10 25 70-60 5z" fill="#e8dce8" />
      <path d="M580 230l50-60 60 30 80 120-190 70-20-30z" fill="#e8dce8" />
      <path d="M400 490l150-10 5 70-140 15z" fill="#f2efe9" />
      <path d="M720 790l160 40 100 70-60 130-100 80-140-20z" fill="#f2efe9" />
      <path d="M1010 1060l30-150 170-10-10 200-40 60-160-50z" fill="#f2efe9" />
      <path d="M540 960l80-30 200 55-100 80 -130 20z" fill="#e8dce8" />
      <path d="M610 1080l60-10v100l-50-20z" fill="#e8dce8" />
      <path d="M44 1150l200-10v70H44z" fill="#f2efe9" />
      <path d="M390 185l140 70-10 30-120-20z" fill="#aad3df" />
      <path d="M400 270l110 20 65 10-75 150-20-20 5-90-55-20z" fill="#c8facc" />
      <path d="M490 410l30 5-20 30-15-10zM400 1025l32 25-10 30-28-30zM205 1250l30-10 20 35-40 10z" fill="#9cdcc0" />
      <path d="M985 960l110 30v70l-60-30z" fill="#e0f9e0" />
      <path d="M990 900l115 15-5 90h-25v-30l-25-5-5 50-60-40z" fill="#9cdcc0" />
      <path d="M1440 540l38-8v50l-15 20zM190 1170l20-5 20 60-30-10zM1165 1200l30 10-20 45-20-15z" fill="#cdebd0" />
      <path d="M105 1035l190-55-155 125-30-20z" fill="#ffffe5" />
      <path d="M700 150l160 60 50 220-80 60-60-150z" fill="#eadfea" />
      <path d="M1430 1235l80-75v60zM1220 1200l30-40 20 10z" fill="#cdebb0" />
      <path d="M920 1300l100-60 60 60z" fill="#f2efe9" />
      <path d="M910 1070l50 10-20 50-30-10z" fill="#e8dce8" />

      <Road kind="white" w={5} d="M44 870L300 920 460 850M44 600L460 830 600 850 670 900M460 570L820 550M44 1115L220 1145M300 920L150 1010M690 1100L1160 1160M1280 870V1100M1270 1100L1400 1120 1530 1080M1500 900V1290M44 580L80 480" />
      <Road kind="white" w={3} d="M880 940L960 990 1060 1050M880 940L960 890M530 600v-60M280 940L380 1060 340 1100 500 1240M240 1220L300 1305M1240 940L1568 1000" />
      <Rail d="M190 50L75 400 90 430M220 220L155 400 160 460M310 220L230 460M240 420L340 540M310 475L305 530M80 430L390 590 440 580 490 480 560 320M560 320L620 210 680 180" w={4} c="#b5b4b2" />
      <Rail d="M595 590L560 690 600 760M650 620L600 760 620 800M685 625L620 780 680 900M685 690L640 820M715 700L660 860M740 715L680 860M455 590l10 60" w={4} c="#b0b0ae" />
      <Rail d="M600 760L680 900" w={4} c="#b0b0ae" />
      <Road kind="yellow" w={7} d="M44 430L240 530 400 600M830 570L780 700 700 900 690 1305" />
      <Road kind="orange" w={11} d="M290 0L310 200 360 400 490 900 600 1120 650 1305" />
      <Road kind="orange" w={8} d="M725 0L830 140 900 260 1100 500 1160 640 1230 640M890 0L1020 220 1240 620M1460 0L1390 130 1370 280 1260 640" />
      <Rail d="M560 0L680 180 800 400M620 0L760 200 820 260M700 180L820 460 830 540M690 170L880 250" w={6} c="#b3abb3" />
      <Rail d="M680 0L860 250 1060 540 1160 680 1165 750 1130 830 1070 855 780 770 720 830 690 900 670 1305" w={5} />
      <Rail d="M690 20L860 250 1060 540M1070 855L780 770" w={1.500} c="#dddddd" />
      <Rail d="M1170 740L1200 745 1240 810V850" w={4} />
      <Road kind="pink" w={16} d="M140 -20L400 150 540 240 820 540 1020 700Q1100 745 1180 740L1330 760 1400 750" />
      <Road kind="salmon" w={12} d="M1235 830V1060L1180 1180 1070 1305M1235 1050L1330 1150 1420 1305" />
      <Road kind="salmon" w={12} d="M1240 630L1250 700 1240 820" />
      <Road kind="pink" w={8} d="M1250 810L1330 790" />
      <path d="M1310 100l40-50M1310 110l-20 110-10 240-110 170M990 630l130 50M980 620l-50 140M890 830l100 60-20 80-150 200-110-60M44 1220l190 0 60-130 60 50v50l100 80" fill="none" stroke="#c6b2cc" strokeWidth="4" strokeDasharray="11 3" vectorEffect="non-scaling-stroke" />
      <path d="M1258 1242l19-36 19 36z" fill="#c39a56" />
      <path d="M1200 1240q60 60 110 10M1200 1210q30-40 90-30" fill="none" stroke="#d5d5d0" strokeWidth="5" vectorEffect="non-scaling-stroke" />
    </Tile>

    <Tile x={1930} y={740}>
      <path d="M1020 110l50 20 5 50-55-60zM1170 110l25 5v90l-25-20zM855 730l60 30-10 30-50-20z" fill="#f9d2cb" />
      <path d="M1140 230l40 80v30l-60-20zM1190 330l50 50-30 10zM1210 430l40-30-30 60zM410 1170q20-35 70-10v45h-60zM1160 1040h25v50h-25zM565 1160h35l-10 35h-25z" fill="#cfe9b0" />
      <path d="M1340 695h40v50h-40zM595 225h45v50h-45zM385 340l35-10v60l-40-10zM675 850l40 20v50l-20-15zM1230 0h60l-20 55zM120 460h18l-8 20z" fill="#9cdcc0" />
      <path d="M685 340l28 5v35h-28zM800 550q30 20 20 70l-20-20zM990 180l30 10v20l-30-10z" fill="#c0eacb" />
      <path d="M965 840l45 20v40l-45-10z" fill="#8fb694" />
      <path d="M1410 60l61 20v40z" fill="#eceed0" />
      <path d="M890 790l160 40-10 180-140 30-40-60z" fill="#f2efe9" />
      <path d="M1040 860l100 10-20 90-90 40z" fill="#e8dce8" />
      <path d="M600 660l180 80-70 200-160-100-150 60-110-120 200-100z" fill="#f0e9e8" />
      <path d="M230 590l130 10-20 50-80 20zM500 430l160 10-30 60-70-20z" fill="#f0e9e8" />
      <path d="M1400 10q40 0 60 30M960 190v-30M870 500l50 60M1040 760l20 30M1380 440l-20 80" fill="none" stroke="#aad3df" strokeWidth="5" vectorEffect="non-scaling-stroke" />

      <Road kind="white" w={6} d="M1100 150L1040 300 960 650 955 700M970 60L980 190 900 290M910 300L1030 305M850 470L990 520M820 640L960 710M820 720L780 830 840 940 870 820 780 830M320 200L600 200 850 250M200 0L280 620M40 1020V1200M0 1000H100L340 1200M480 940L620 1200M1471 460L1420 520 1460 700M1290 160L1471 380M1160 940L1040 1000" />
      <Road kind="white" w={4} d="M270 730L400 870 480 960M500 410L850 450M700 430L660 600M150 730V870M230 590L280 740M380 800L600 720M450 690L400 790M560 700L640 880M500 740L600 900" />
      <Road kind="yellow" w={12} d="M900 10L1030 40 1100 110 1220 330 1300 420 1471 520" />
      <Road kind="yellow" w={8} d="M980 20L910 180 850 560 790 740M1040 40V90M720 790L860 690" />
      <Road kind="orange" w={10} d="M870 1055L1000 1040 1471 1000" />
      <Road kind="orange" w={8} d="M280 0L560 560" />
      <Road kind="pink" w={16} d="M100 780L550 570 620 570 1170 860M1430 970H1471" />
      <Road kind="salmon" w={12} d="M560 600L620 640 880 1060 1000 1305" />
      <Rail d="M280 0L570 560 650 690Q690 740 780 765L1020 855 1060 920M1060 900h60M1060 900l-20 60M1070 920l10 50" w={5} c="#96939a" />
      <path d="M0 10l260 30 380 35 90 35 180 10M920 130l60-10 60-80 130-40M910 150l-40 250-40 200M965 760l-30 280M880 1060h60M930 1170h200v60" fill="none" stroke="#c2adc8" strokeWidth="4" strokeDasharray="11 3" vectorEffect="non-scaling-stroke" />
    </Tile>

    <Metro pts={[[1521, 357], [1611, 359], [1413, 533], [1475, 593, 12], [1821, 417], [2013, 481], [2115, 499], [2251, 513], [2363, 549]]} />

    <g className="font-['Noto_Sans',sans-serif]" fill="#3c3a36" stroke="#ffffffb0" strokeWidth="4" paintOrder="stroke" strokeLinejoin="round">
      <text x="1551" y="410" fontSize="29" fontWeight="500" textLength="170" lengthAdjust="spacingAndGlyphs" fill="#444">Guadalajara</text>
      <text x="1851" y="809" fontSize="29" fontWeight="500" textLength="183" lengthAdjust="spacingAndGlyphs" fill="#333">Tlaquepaque</text>
      <g fontSize="17.500" fontWeight="600" stroke="#f7fabf90" strokeWidth="3">
        <text transform="translate(1823 457) rotate(15.600)" textLength="107" lengthAdjust="spacingAndGlyphs">Calle Gigantes</text>
        <text transform="translate(2161 531) rotate(6)" textLength="107" lengthAdjust="spacingAndGlyphs">Calle Gigantes</text>
        <text transform="translate(1818 679) rotate(19)" textLength="123" lengthAdjust="spacingAndGlyphs">Avenida Río Nilo</text>
        <text transform="translate(2129 738) rotate(3)" textLength="122" lengthAdjust="spacingAndGlyphs">Avenida Río Nilo</text>
        <text transform="translate(2429 377) rotate(93)" textLength="128" lengthAdjust="spacingAndGlyphs">Avenida Malecón</text>
        <text fontSize="16.500" textLength="214" lengthAdjust="spacingAndGlyphs"><textPath href="#lbl-gallo">Calzada Jesús González Gallo</textPath></text>
        <text fontSize="16.500" textLength="168" lengthAdjust="spacingAndGlyphs"><textPath href="#lbl-barrera">Calle Juan de la Barrera</textPath></text>
        <text fontSize="16.500"><textPath href="#lbl-zapo">Carretera Libre a Zapotlanejo</textPath></text>
      </g>
      <text transform="translate(2409 703) rotate(-67)" fontSize="20" fontWeight="500" textLength="118" fill="#a184a8" strokeWidth="2">Guadalajara</text>
      <text x="1804" y="1178" fontSize="18" textLength="90" fill="#8f7a60" strokeWidth="2">El Tapatio</text>
    </g>

    <g className="font-['Noto_Sans',sans-serif]" fontSize="20" fontWeight="500" fill="#7a3550" textAnchor="middle">
      <rect x="1866.500" y="946" width="104" height="106" rx="5" fill="#e8cfd2" stroke="#d3a0a8" strokeWidth="2" />
      <text x="1918" y="970" textLength="83">MEX 15D</text>
      <text x="1918" y="994.500" textLength="68">MEX 80</text>
      <text x="1918" y="1018" textLength="68">MEX 70</text>
      <text x="1918" y="1042" textLength="68">MEX 90</text>
      <rect x="2375" y="1020" width="103" height="58" rx="5" fill="#e8cfd2" stroke="#d3a0a8" strokeWidth="2" />
      <text x="2425.500" y="1045.500" textLength="83">MEX 15D</text>
      <text x="2425.500" y="1069.500" textLength="83">MEX 80D</text>
    </g>

    <path d="M1807 429L2324 531 2201 1070 1719 995 1549 695z" fill="#76127d" fillOpacity=".2" stroke="#76127d" strokeWidth="6" strokeLinejoin="round" />
  </svg>
);

const MapPanel = () => (
  <div className="relative h-[854px] w-[1116px] overflow-hidden">
    <CityMap />
    <div className="absolute top-5 left-5 flex flex-col rounded-lg border-4 border-black/20 bg-white bg-clip-padding">
      <button className="flex h-[62px] w-[60px] items-center justify-center border-b-2 border-[#ccc] pt-2">
        <svg viewBox="0 0 24 24" className="size-6" stroke="#000" strokeWidth="3"><path d="M0 12h24M12 0v24" /></svg>
      </button>
      <button className="flex h-[61px] w-[60px] items-center justify-center pt-2">
        <svg viewBox="0 0 24 24" className="size-6" stroke="#000" strokeWidth="3.500"><path d="M0 12h24" /></svg>
      </button>
    </div>
    <div className="absolute right-0 bottom-0 flex h-[34px] items-center bg-white/80 pr-[10px] pl-[9px] font-['Liberation_Sans',sans-serif] text-[24px] tracking-[0.36px] whitespace-pre text-[#333]">
      <span className="mr-[7px] flex h-4 w-6 flex-col">
        <span className="h-2 bg-[#4c7be1]" />
        <span className="h-2 bg-[#ffd500]" />
      </span>
      <span className="text-[#2a75a8] [-webkit-text-stroke:0.5px_#2a75a8]">Leaflet</span>
      <span>{" | © "}</span>
      <span className="text-[#2a75a8] [-webkit-text-stroke:0.5px_#2a75a8]">OpenStreetMap</span>
      <span>{" contributors"}</span>
    </div>
  </div>
);

/* ---------- Modal ---------- */

const AreaIcon = () => (
  <svg viewBox="0 0 60 60" className="size-[60px]" fill="none" stroke="#000" strokeWidth="3.200">
    <path d="M12 6h36M12 54h36M6 12v36M54 12v36" strokeWidth="2.800" />
    <rect x="1.600" y="1.600" width="9" height="9" rx="1" />
    <rect x="49.400" y="1.600" width="9" height="9" rx="1" />
    <rect x="1.600" y="49.400" width="9" height="9" rx="1" />
    <rect x="49.400" y="49.400" width="9" height="9" rx="1" />
  </svg>
);

const StoreOutlineIcon = () => (
  <svg viewBox="0 0 80 80" className="size-20" fill="none" stroke="#000" strokeWidth="2.700" strokeLinejoin="round">
    <path d="M14.500 9V5q0-3 3-3h3M24 2h4M31 2h31q3 0 3 3v4" />
    <path d="M13 9h54l11 9.500H2zM13 9L2.500 18.500M67 9l10.500 9.500M24 9l-5.500 9M35 9l-2 9M45 9l2 9M56 9l5.500 9" />
    <path d="M2.500 18.500v8a7.500 7.500 0 0 0 15 0 7.500 7.500 0 0 0 15 0 7.500 7.500 0 0 0 15 0 7.500 7.500 0 0 0 15 0 7.500 7.500 0 0 0 15 0v-8M17.500 18.500v8M32.500 18.500v8M47.500 18.500v8M62.500 18.500v8" />
    <path d="M10 33v35M70 33v35M16 38.500h24v18H16zM44.500 68V38.500h19V68M2 68h76v9.500H73M2 68v9.500h56M61 77.500h4M67 77.500h2" />
  </svg>
);

const PeopleOutlineIcon = () => (
  <svg viewBox="0 0 80 60" className="h-[60px] w-20" fill="none" stroke="#000" strokeWidth="2.600" strokeLinejoin="round">
    <path d="M40 1.500c8 0 13.500 6 13.500 14S48 28.500 40 28.500s-13.500-5-13.500-13S32 1.500 40 1.500z" />
    <path d="M31 26.500q-15 6-15.500 25v7.200h49v-7.200q-.5-19-15.500-25" />
    <path d="M28 4.500Q24 1.200 20 1.500C13 1.500 9 6 9 12s4 11 11 11q2 0 4-.6M13.500 21.500Q2 26 1.500 40v6.500H16" />
    <path d="M52 4.500Q56 1.200 60 1.500c7 0 11 4.500 11 10.500s-4 11-11 11q-2 0-4-.6M66.500 21.500Q78 26 78.500 40v6.500H64" />
  </svg>
);

const Divider = ({ children }: { children: React.ReactNode }) => (
  <div className="flex h-20 w-full items-center">
    <span className="h-0.5 flex-1 bg-[#f0f0f0]" />
    <span className="px-[31px] text-[29.600px] font-semibold text-[#2a376d]">{children}</span>
    <span className="h-0.5 flex-1 bg-[#f0f0f0]" />
  </div>
);

const StatCard = ({ icon, value, label }: { icon: React.ReactNode; value: string; label: string }) => (
  <section className="flex h-[371px] w-[938px] flex-col items-center rounded-[10px] border-4 border-black pt-10">
    <div className="flex h-20 items-center">{icon}</div>
    <div className="mt-14 w-full">
      <Divider>{value}</Divider>
      <Divider>{label}</Divider>
    </div>
  </section>
);

const AreaModal = () => (
  <div className="flex h-[1114px] w-[2352px] flex-col overflow-hidden rounded-2xl bg-white shadow-[0_16px_60px_8px_rgba(0,0,0,0.16)]">
    <div className="flex h-[98px] shrink-0 items-start bg-[#29366d] pt-[15px] pr-[38px] pl-5">
      <div className="pt-[5px]"><AreaIcon /></div>
      <h2 className="ml-6 flex-1 pt-[21px] text-[31px] leading-[38px] font-semibold text-white">Area: Tlaquepaque</h2>
      <button>
        <svg viewBox="0 0 56 56" className="size-14" fill="none" stroke="#fff" strokeWidth="2">
          <circle cx="28" cy="28" r="26.800" />
          <path d="M17.500 16.500l21.500 23M38.500 16.500l-21 23" strokeWidth="2.600" />
        </svg>
      </button>
    </div>
    <div className="flex gap-[85px] pt-9 pl-[60px]">
      <div className="flex w-[938px] flex-col">
        <StatCard icon={<StoreOutlineIcon />} value="0" label="Registered outlets in the area" />
        <div className="h-[19px]" />
        <StatCard icon={<PeopleOutlineIcon />} value="17" label="Registered users in the area" />
        <button className="mt-3 ml-[23px] flex h-20 w-[884px] items-center justify-center rounded-full bg-[#7bbb5a] text-[28px] font-bold text-white shadow-[0_4px_0_#e6f2fd]">
          Edit Area
        </button>
      </div>
      <MapPanel />
    </div>
  </div>
);

export default function App() {
  return (
    <div className={`relative h-[1490px] w-[2940px] overflow-hidden bg-[#05050f] ${INTER}`}>
      <div className="relative flex h-[1488px] flex-col overflow-hidden rounded-b-[22px] border-x-2 border-b-2 border-[#6f6f6f] bg-[#242424] pt-4 pl-3.5">
        <div className="flex h-[1472px]">
          <Sidebar />
          <div className="flex w-[2524px] shrink-0 flex-col bg-[#ededed]">
            <TopBar />
            <AreasPage />
          </div>
        </div>
        <div className="absolute inset-0 bg-black/45" />
        <div className="pointer-events-none absolute inset-x-0 bottom-0 h-24 bg-gradient-to-b from-transparent to-black/10" />
      </div>
      <div className="absolute inset-0 flex justify-center pt-[187px]">
        <AreaModal />
      </div>
    </div>
  );
}
